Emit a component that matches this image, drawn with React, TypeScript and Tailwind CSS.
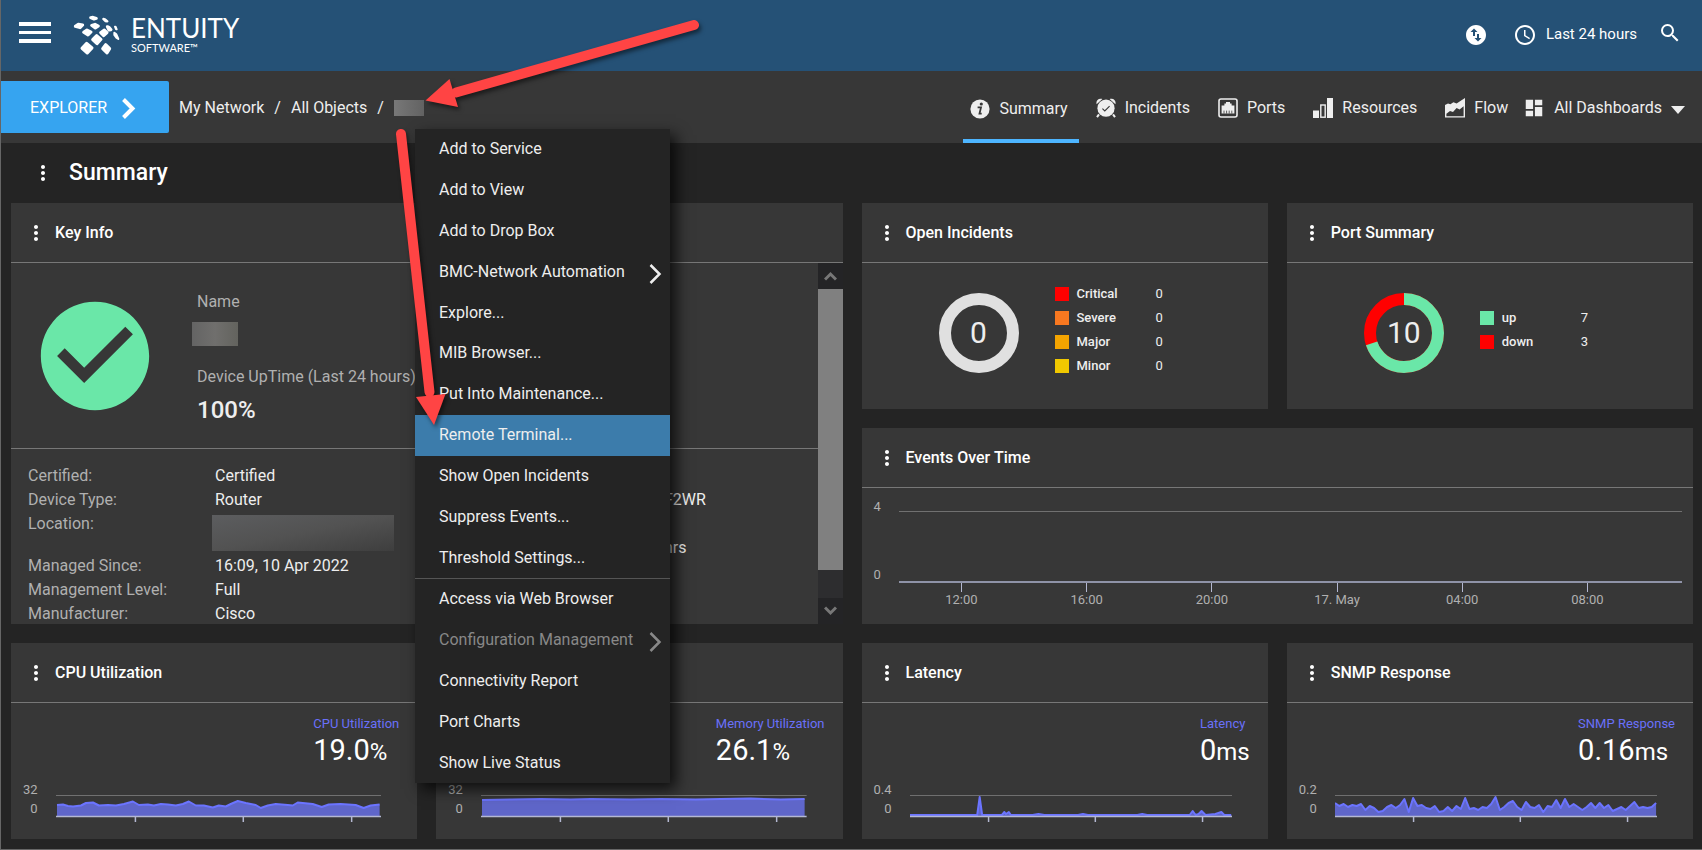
import type { ReactNode } from "react";
import {
  MdCheckCircle, MdDashboard, MdMoreVert, MdSchedule, MdSearch, MdSwapVerticalCircle,
} from "react-icons/md";

interface MenuEntry {
  label: string;
  submenu?: boolean;
  disabled?: boolean;
  active?: boolean;
  divider?: boolean;
}

const MENU: MenuEntry[] = [
  { label: "Add to Service" },
  { label: "Add to View" },
  { label: "Add to Drop Box" },
  { label: "BMC-Network Automation", submenu: true },
  { label: "Explore..." },
  { label: "MIB Browser..." },
  { label: "Put Into Maintenance..." },
  { label: "Remote Terminal...", active: true },
  { label: "Show Open Incidents" },
  { label: "Suppress Events..." },
  { label: "Threshold Settings..." },
  { label: "Access via Web Browser", divider: true },
  { label: "Configuration Management", submenu: true, disabled: true },
  { label: "Connectivity Report" },
  { label: "Port Charts" },
  { label: "Show Live Status" },
];

const INCIDENTS = [
  { label: "Critical", value: 0, swatch: "bg-[#ff0000]" },
  { label: "Severe", value: 0, swatch: "bg-[#f87820]" },
  { label: "Major", value: 0, swatch: "bg-[#f4a400]" },
  { label: "Minor", value: 0, swatch: "bg-[#f0c800]" },
];

const PORTS = [
  { label: "up", value: 7, swatch: "bg-[#6ae7a8]" },
  { label: "down", value: 3, swatch: "bg-[#ff0000]" },
];

const HOURS = ["12:00", "16:00", "20:00", "17. May", "04:00", "08:00"];

// [x, height] pairs on a 326 x 21 plot
type Point = [number, number];

const CPU: Point[] = [
  [1, 11], [7, 11.5], [12, 10], [17, 9.5], [25, 10.5], [30, 13], [37, 13.5], [43, 10.5], [52, 11],
  [60, 10.5], [68, 12], [77, 14.5], [83, 11], [92, 11.5], [98, 10.5], [105, 12], [112, 11.5], [120, 10.5],
  [127, 12], [133, 14.5], [140, 10.5], [148, 10.5], [157, 8.5], [163, 10.5], [170, 9.5], [175, 12],
  [182, 15], [190, 13], [200, 11], [205, 8], [212, 10.5], [220, 12], [232, 11], [237, 10.5], [242, 13.5],
  [257, 12], [266, 9], [273, 11.5], [285, 12], [300, 11], [308, 8], [315, 10.5], [324, 11.5],
];

const MEMORY: Point[] = [
  [1, 16], [30, 16.5], [60, 17], [90, 16.5], [110, 17], [150, 16.5], [180, 17], [215, 16.5],
  [240, 17], [270, 17.5], [300, 16.5], [324, 17],
];

const LATENCY: Point[] = [
  [0, 1], [68, 1], [70.5, 19], [73, 1], [93, 1], [95.5, 4], [97, 2], [100, 4], [102, 1], [124, 1],
  [130, 2], [136, 1], [170, 1], [175, 2], [180, 1], [230, 1], [235, 2], [240, 1], [283, 1], [286, 5],
  [289, 1], [292, 2], [295, 5], [299, 1], [309, 2], [315, 4], [318, 1], [325, 1],
];

const SNMP: Point[] = [
  13, 10, 12, 9, 11, 10, 12, 6, 10, 8, 4, 5, 9, 11, 8, 11, 17, 4, 18, 10, 11, 8, 7, 10, 4, 5, 9, 5, 10, 7,
  18, 7, 8, 6, 9, 8, 12, 19, 6, 9, 13, 15, 9, 6, 14, 9, 8, 11, 4, 10, 9, 16, 8, 17, 9, 12, 9, 6, 9, 13,
  8, 13, 8, 11, 5, 7, 9, 6, 10, 14, 8, 9, 8, 9, 13,
].map((h, i) => [i * 4.39, h]);

function Logo() {
  return (
    <div className="flex items-center gap-[10px] text-white">
      <svg width="48" height="42" viewBox="222 42 144 126" fill="currentColor" stroke="currentColor" strokeWidth="9" strokeLinejoin="round">
        <path d="M275 53l7-1 10 3-7 2z" />
        <path d="M313 57l5 1 7 6-6-1z" strokeWidth="7" />
        <path d="M229 79l9-6 13 2-8 8z" />
        <path d="M278 76l10-3 10 5-9 6z" />
        <path d="M325 80l6 3 5 6-6 1z" />
        <path d="M348 80l2 1 3 7-2-1z" strokeWidth="6" />
        <path d="M254 97l10-7 12 6-9 9z" />
        <path d="M305 98l11-8 8 8-10 9z" />
        <path d="M346 98l6 5 6 14-6-4-6-8z" strokeWidth="6" />
        <path d="M281 119l12-12 13 11-12 13z" />
        <path d="M249 145l14-15 16 14-14 15z" />
        <path d="M311 146l9-12 12 12-8 13z" />
      </svg>
      <div className="flex flex-col font-[Lato]">
        <span className="text-[26px] leading-[26px]">ENTUITY</span>
        <span className="text-[11px] leading-[13px]">SOFTWARE™</span>
      </div>
    </div>
  );
}

function InfoIcon() {
  return (
    <svg width="20" height="20" viewBox="0 0 20 20">
      <circle cx="10" cy="10" r="9.6" fill="currentColor" />
      <circle cx="11.3" cy="5" r="1.6" fill="#373737" />
      <path d="M7.6 8.4h3.4l-1.5 6.200h2.200" stroke="#373737" strokeWidth="1.8" fill="none" />
    </svg>
  );
}

function AlarmIcon() {
  return (
    <svg width="20" height="20" viewBox="0 0 20 20">
      <path d="M0.6 6.2C-.4 2.6 2.6-.4 6.4 1zM19.4 6.2c1-3.6-2-6.6-5.8-5.2z" fill="currentColor" />
      <circle cx="10" cy="10.2" r="8.6" fill="currentColor" />
      <path d="M3 16.4L1 19.2M17 16.4l2 2.8" stroke="currentColor" strokeWidth="2" />
      <path d="M6.4 10.6l2.400 2.400 4.800-4.800" stroke="#373737" strokeWidth="1.1" fill="none" />
    </svg>
  );
}

function PortIcon() {
  return (
    <svg width="20" height="20" viewBox="0 0 20 20">
      <rect x="1" y="1" width="18" height="18" rx="2" fill="none" stroke="currentColor" strokeWidth="1.6" />
      <path d="M3.6 15.6V7.4h2.8V5.4h1.6V4h4v1.4h1.6v2h2.8v8.2z" fill="currentColor" />
      <path d="M6 15.6v-3M8.6 15.6v-3M11.2 15.6v-3M13.8 15.6v-3" stroke="#373737" strokeWidth="0.8" />
    </svg>
  );
}

function BarsIcon() {
  return (
    <svg width="20" height="20" viewBox="0 0 20 20">
      <path d="M0 12.500h6V20H0zM14 0h6v20h-6z" fill="currentColor" />
      <rect x="7.8" y="7" width="4.4" height="12.2" fill="none" stroke="currentColor" strokeWidth="1.4" />
    </svg>
  );
}

function FlowIcon() {
  return (
    <svg width="20" height="20" viewBox="0 0 20 20">
      <path d="M0 19.6V7l3-1.6 2.4.8 3-2 3.2 1.4L15.4 3 20 0v19.6z" fill="currentColor" />
      <path d="M1.4 18.200v-2.4L5 13l3 1 3.6-4 3 1.6 4-3.4v10z" fill="#373737" />
    </svg>
  );
}

function Tab({ icon, label, active }: { icon: ReactNode; label: string; active?: boolean }) {
  return (
    <a
      href="#"
      className={
        active
          ? "flex items-center gap-[9px] border-b-4 border-[#4db5ff] pt-2 pr-[11px] pl-[7px]"
          : "flex items-center gap-[9px] pt-[2px] pr-[11px] pl-[7px]"
      }
    >
      {icon}
      {label}
    </a>
  );
}

function Card({ title, className = "", children }: { title: string; className?: string; children: ReactNode }) {
  return (
    <section className={`flex min-w-0 flex-col overflow-hidden bg-[#373737] ${className}`}>
      <header className="flex h-[60px] shrink-0 items-center gap-[7px] border-b border-[#777] pl-[13px]">
        <button aria-label={`${title} options`} className="text-white">
          <MdMoreVert size={24} />
        </button>
        <h2 className="text-base font-medium text-white">{title}</h2>
      </header>
      {children}
    </section>
  );
}

function Legend({ rows }: { rows: typeof INCIDENTS }) {
  return (
    <table className="text-[13px] leading-6 text-[#eee]">
      <tbody>
        {rows.map((row) => (
          <tr key={row.label}>
            <td className="p-0">
              <div className={`h-[14px] w-[14px] ${row.swatch}`} />
            </td>
            <th scope="row" className="w-[87px] p-0 pl-2 text-left font-medium">{row.label}</th>
            <td className="p-0">{row.value}</td>
          </tr>
        ))}
      </tbody>
    </table>
  );
}

// share is the part of the ring, 0 to 100, drawn in green; the rest is red
function Donut({ total, share }: { total: number; share?: number }) {
  return (
    <div className="relative h-20 w-20">
      <svg width="80" height="80" viewBox="0 0 80 80" fill="none" strokeWidth="12">
        <circle cx="40" cy="40" r="34" stroke={share === undefined ? "#e0e0e0" : "#ff0000"} />
        {share !== undefined && (
          <circle cx="40" cy="40" r="34" stroke="#6ae7a8" pathLength="100" strokeDasharray={`${share} 100`} transform="rotate(-90 40 40)" />
        )}
      </svg>
      <span className="absolute inset-0 flex items-center justify-center text-[30px] leading-none text-[#eee]">{total}</span>
    </div>
  );
}

function SparkCard({ title, value, unit, max, data }: {
  title: string; value: string; unit: string; max: string; data: Point[];
}) {
  const line = data.map(([x, h]) => `${x},${22 - h}`).join(" ");
  const last = data[data.length - 1][0];
  return (
    <Card title={title}>
      <div className="flex justify-end pt-[13px] pr-[18px]">
        <div>
          <div className="text-[13px] leading-4 text-[#6a70fa]">{title}</div>
          <div className="text-[29px] leading-9 text-white">
            {value}<span className="text-2xl leading-none">{unit}</span>
          </div>
        </div>
      </div>
      <div className="flex gap-[18px] pt-3 pr-9 pl-3">
        <div className="text-right text-[13px] leading-[19px] text-[#b0b0b0]">
          <div>{max}</div>
          <div>0</div>
        </div>
        <svg className="mt-[14px] h-7 min-w-0 flex-1" viewBox="0 0 326 28" preserveAspectRatio="none" fill="none">
          <path d="M0 1.5H326" stroke="#707070" />
          <polygon points={`${data[0][0]},22 ${line} ${last},22`} fill="#5f66c9" />
          <polyline points={line} stroke="#6b74ff" strokeWidth="2" strokeLinejoin="round" />
          <path d="M0 22.5H326M79.5 23v5M187.5 23v5M296 23v5" stroke="#b4b8d2" strokeWidth="1.5" />
        </svg>
      </div>
    </Card>
  );
}

function ContextMenu() {
  return (
    <div role="menu" className="absolute top-[129px] left-[414px] z-10 flex h-[654px] w-[255px] flex-col bg-[#242424] text-base text-[#eee] shadow-[6px_6px_14px_rgba(0,0,0,0.75)]">
      {MENU.map((item) => (
        <button
          key={item.label}
          role="menuitem"
          disabled={item.disabled}
          className={`flex flex-1 items-center justify-between pr-2 pl-6 text-left ${item.active ? "bg-[#3c7cab]" : ""} ${item.divider ? "border-t border-[#555]" : ""} ${item.disabled ? "text-[#888]" : ""}`}
        >
          {item.label}
          {item.submenu && (
            <svg className="mt-1" width="13" height="20" viewBox="0 0 13 20" fill="none" stroke="currentColor" strokeWidth="2.5">
              <path d="M1.5 1l9 9-9 9" />
            </svg>
          )}
        </button>
      ))}
    </div>
  );
}

function Arrows() {
  return (
    <svg className="pointer-events-none absolute top-0 left-0 z-20 drop-shadow-[2px_3px_2px_rgba(0,0,0,0.5)]" width="710" height="440" viewBox="1 0 710 440" fill="#ff4444" stroke="#ff4444" strokeLinecap="round">
      <path d="M694 25L456 92.500" strokeWidth="10" />
      <path d="M425.500 100.500L449.500 79L458 107z" stroke="none" />
      <path d="M401 134L429.500 392" strokeWidth="10" />
      <path d="M434 425L416 397L445.500 394z" stroke="none" />
    </svg>
  );
}

export default function App() {
  return (
    <div className="relative overflow-hidden border-b border-l border-[#666] bg-[#242424] font-[Roboto,sans-serif] text-base text-[#eee]">
      <header className="flex h-[71px] items-center bg-[#255176] pr-5 pb-[2px] pl-[18px] text-white">
        <button aria-label="Menu" className="mr-[22px] pb-1">
          <svg width="32" height="21" viewBox="0 0 32 21" fill="currentColor">
            <path d="M0 0h32v4H0zM0 9h32v3H0zM0 17h32v4H0z" />
          </svg>
        </button>
        <Logo />
        <div className="ml-auto flex items-center">
          <button aria-label="Refresh"><MdSwapVerticalCircle size={24} /></button>
          <button className="ml-[25px] flex items-center gap-[9px] text-[15px]">
            <MdSchedule size={24} />
            Last 24 hours
          </button>
          <button aria-label="Search" className="ml-[21px] pb-1"><MdSearch size={24} /></button>
        </div>
      </header>

      <nav className="flex h-[72px] items-stretch bg-[#373737] pr-[17px]">
        <button className="my-[10px] flex w-[168px] items-center gap-[15px] rounded-r-[2px] bg-[#36a4f0] pt-[2px] pl-[29px] text-white">
          EXPLORER
          <svg width="14" height="21" viewBox="0 0 14 21" fill="none" stroke="currentColor" strokeWidth="4">
            <path d="M1.500 1.500l9 9-9 9" />
          </svg>
        </button>
        <div className="flex items-center gap-[10px] pt-[2px] pl-[10px]">
          <a href="#">My Network</a>
          <span>/</span>
          <a href="#">All Objects</a>
          <span>/</span>
          <span className="h-4 w-[30px] bg-linear-to-r from-[#787878] to-[#626262]" />
        </div>
        <div className="ml-auto flex gap-[10px]">
          <Tab icon={<InfoIcon />} label="Summary" active />
          <Tab icon={<AlarmIcon />} label="Incidents" />
          <Tab icon={<PortIcon />} label="Ports" />
          <Tab icon={<BarsIcon />} label="Resources" />
          <Tab icon={<FlowIcon />} label="Flow" />
        </div>
        <button className="flex items-center gap-[9px] pt-[2px] pl-1">
          <MdDashboard size={22} />
          All Dashboards
          <svg className="mt-1" width="14" height="8" viewBox="0 0 14 8" fill="currentColor">
            <path d="M0 0h14L7 8z" />
          </svg>
        </button>
      </nav>

      <div className="flex h-[60px] items-center gap-[14px] pl-[30px] text-white">
        <button aria-label="Dashboard options"><MdMoreVert size={24} /></button>
        <h1 className="text-[23px] font-medium">Summary</h1>
      </div>

      <main className="grid grid-cols-4 grid-rows-[206px_196px_196px] gap-[19px] pr-[9px] pb-[10px] pl-[10px]">
        <Card title="Key Info" className="col-span-2 row-span-2">
          <div className="flex min-h-0 flex-1">
            <div className="flex min-w-0 flex-1 flex-col">
              <div className="flex shrink-0 items-start gap-[37px] border-b border-[#777] pt-[27px] pb-[22px] pl-[19px]">
                <MdCheckCircle size={130} className="mt-px shrink-0 text-[#6ae7a8]" />
                <div className="text-[#b0b0b0]">
                  <div>Name</div>
                  <div className="mt-2 -ml-[5px] h-6 w-[46px] bg-linear-to-r from-[#646464] via-[#706f6d] to-[#63635e]" />
                  <div className="mt-[19px]">Device UpTime (Last 24 hours)</div>
                  <div className="mt-[5px] text-2xl font-medium text-[#eee]">100%</div>
                </div>
              </div>
              <div className="flex pt-[15px] pl-[17px]">
                <dl className="grid w-[636px] shrink-0 grid-cols-[187px_1fr] content-start text-[#eee] [&>dt]:text-[#b0b0b0]">
                  <dt>Certified:</dt>
                  <dd>Certified</dd>
                  <dt>Device Type:</dt>
                  <dd>Router</dd>
                  <dt className="h-[42px]">Location:</dt>
                  <dd className="mt-[3px] -ml-[3px] h-9 w-[182px] bg-linear-to-br from-[#5c5d5f] via-[#525252] to-[#3e3e3e]" />
                  <dt>Managed Since:</dt>
                  <dd>16:09, 10 Apr 2022</dd>
                  <dt>Management Level:</dt>
                  <dd>Full</dd>
                  <dt>Manufacturer:</dt>
                  <dd>Cisco</dd>
                </dl>
                <div className="pt-6 text-[#eee]">
                  <div>F2WR</div>
                  <div className="pt-6">hrs</div>
                </div>
              </div>
            </div>
            <div className="flex w-[25px] shrink-0 flex-col bg-[#2d2d2f] text-[#777]">
              <div className="flex h-[26px] items-center justify-center bg-[#242426]">
                <svg width="13" height="10" viewBox="0 0 13 10" fill="none" stroke="currentColor" strokeWidth="3">
                  <path d="M1 8.500L6.500 3L12 8.500" />
                </svg>
              </div>
              <div className="flex-1 bg-[#808080]" />
              <div className="mt-7 flex h-[26px] items-center justify-center bg-[#242426]">
                <svg width="13" height="10" viewBox="0 0 13 10" fill="none" stroke="currentColor" strokeWidth="3">
                  <path d="M1 1.500L6.500 7L12 1.500" />
                </svg>
              </div>
            </div>
          </div>
        </Card>

        <Card title="Open Incidents">
          <div className="flex flex-1 items-center gap-9 pb-3 pl-[77px]">
            <div className="pt-[6px]"><Donut total={0} /></div>
            <Legend rows={INCIDENTS} />
          </div>
        </Card>

        <Card title="Port Summary">
          <div className="flex flex-1 items-center gap-9 pb-3 pl-[77px]">
            <div className="pt-[6px]"><Donut total={10} share={70} /></div>
            <Legend rows={PORTS} />
          </div>
        </Card>

        <Card title="Events Over Time" className="col-span-2">
          <div className="flex gap-[18px] pt-[11px] pr-[11px] pl-3 text-[13px] leading-4 text-[#b0b0b0]">
            <div className="flex h-[84px] flex-col justify-between">
              <span>4</span>
              <span>0</span>
            </div>
            <div className="flex-1 pt-3">
              <div className="h-[72px] border-t border-b-2 border-t-[#707070] border-b-[#8f93a8]" />
              <div className="flex pr-8">
                {HOURS.map((hour) => (
                  <div key={hour} className="flex flex-1 flex-col items-center">
                    <div className="h-[9px] w-px bg-[#b4b8d2]" />
                    {hour}
                  </div>
                ))}
              </div>
            </div>
          </div>
        </Card>

        <SparkCard title="CPU Utilization" value="19.0" unit="%" max="32" data={CPU} />
        <SparkCard title="Memory Utilization" value="26.1" unit="%" max="32" data={MEMORY} />
        <SparkCard title="Latency" value="0" unit="ms" max="0.4" data={LATENCY} />
        <SparkCard title="SNMP Response" value="0.16" unit="ms" max="0.2" data={SNMP} />
      </main>

      <ContextMenu />
      <Arrows />
    </div>
  );
}
